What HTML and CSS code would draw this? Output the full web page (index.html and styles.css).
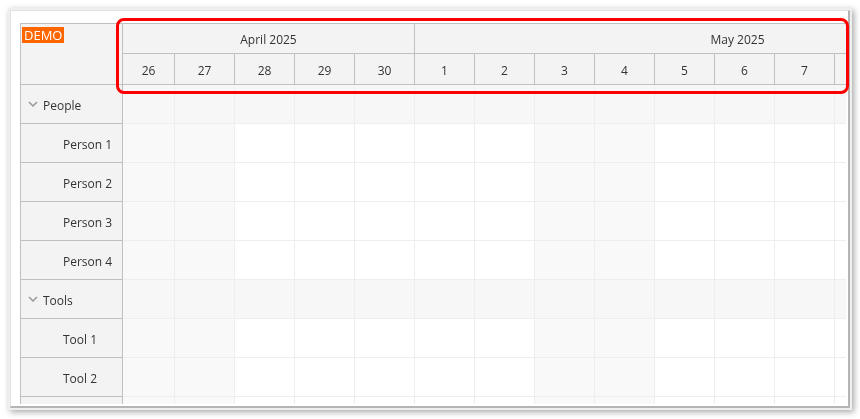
FILE: index.html
```html
<!DOCTYPE html>
<html lang="en">
<head>
    <meta charset="UTF-8">
    <meta name="viewport" content="width=device-width, initial-scale=1.0">
    <title>Scheduler</title>
    <link rel="stylesheet" href="styles.css">
</head>

<body>
    <div class="frame">
    <div class="card">
        <div class="scheduler">
            <!-- resource column -->
            <div class="rowheaders">
                <div class="corner"><span class="demo">DEMO</span></div>
                <div class="rh group"><svg class="chevron" width="10" height="6" viewBox="0 0 10 6"><polyline points="1,1 5,5 9,1"/></svg>People</div>
                <div class="rh child">Person 1</div>
                <div class="rh child">Person 2</div>
                <div class="rh child">Person 3</div>
                <div class="rh child">Person 4</div>
                <div class="rh group"><svg class="chevron" width="10" height="6" viewBox="0 0 10 6"><polyline points="1,1 5,5 9,1"/></svg>Tools</div>
                <div class="rh child">Tool 1</div>
                <div class="rh child">Tool 2</div>
                <div class="rh child"></div>
            </div>

            <!-- time header + grid -->
            <div class="timeline">
                <div class="hrow months">
                    <div class="month april">April 2025</div>
                    <div class="month may">May 2025</div>
                </div>
                <div class="hrow days">
                    <div class="day first">26</div>
                    <div class="day">27</div>
                    <div class="day">28</div>
                    <div class="day">29</div>
                    <div class="day">30</div>
                    <div class="day">1</div>
                    <div class="day">2</div>
                    <div class="day">3</div>
                    <div class="day">4</div>
                    <div class="day">5</div>
                    <div class="day">6</div>
                    <div class="day">7</div>
                    <div class="day"></div>
                </div>

                <div class="row group">
                    <div class="cell first"></div><div class="cell"></div><div class="cell"></div><div class="cell"></div><div class="cell"></div><div class="cell"></div><div class="cell"></div><div class="cell"></div><div class="cell"></div><div class="cell"></div><div class="cell"></div><div class="cell"></div><div class="cell"></div>
                </div>
                <div class="row">
                    <div class="cell first we"></div><div class="cell we"></div><div class="cell"></div><div class="cell"></div><div class="cell"></div><div class="cell"></div><div class="cell"></div><div class="cell we"></div><div class="cell we"></div><div class="cell"></div><div class="cell"></div><div class="cell"></div><div class="cell"></div>
                </div>
                <div class="row">
                    <div class="cell first we"></div><div class="cell we"></div><div class="cell"></div><div class="cell"></div><div class="cell"></div><div class="cell"></div><div class="cell"></div><div class="cell we"></div><div class="cell we"></div><div class="cell"></div><div class="cell"></div><div class="cell"></div><div class="cell"></div>
                </div>
                <div class="row">
                    <div class="cell first we"></div><div class="cell we"></div><div class="cell"></div><div class="cell"></div><div class="cell"></div><div class="cell"></div><div class="cell"></div><div class="cell we"></div><div class="cell we"></div><div class="cell"></div><div class="cell"></div><div class="cell"></div><div class="cell"></div>
                </div>
                <div class="row">
                    <div class="cell first we"></div><div class="cell we"></div><div class="cell"></div><div class="cell"></div><div class="cell"></div><div class="cell"></div><div class="cell"></div><div class="cell we"></div><div class="cell we"></div><div class="cell"></div><div class="cell"></div><div class="cell"></div><div class="cell"></div>
                </div>
                <div class="row group">
                    <div class="cell first"></div><div class="cell"></div><div class="cell"></div><div class="cell"></div><div class="cell"></div><div class="cell"></div><div class="cell"></div><div class="cell"></div><div class="cell"></div><div class="cell"></div><div class="cell"></div><div class="cell"></div><div class="cell"></div>
                </div>
                <div class="row">
                    <div class="cell first we"></div><div class="cell we"></div><div class="cell"></div><div class="cell"></div><div class="cell"></div><div class="cell"></div><div class="cell"></div><div class="cell we"></div><div class="cell we"></div><div class="cell"></div><div class="cell"></div><div class="cell"></div><div class="cell"></div>
                </div>
                <div class="row">
                    <div class="cell first we"></div><div class="cell we"></div><div class="cell"></div><div class="cell"></div><div class="cell"></div><div class="cell"></div><div class="cell"></div><div class="cell we"></div><div class="cell we"></div><div class="cell"></div><div class="cell"></div><div class="cell"></div><div class="cell"></div>
                </div>
                <div class="row">
                    <div class="cell first we"></div><div class="cell we"></div><div class="cell"></div><div class="cell"></div><div class="cell"></div><div class="cell"></div><div class="cell"></div><div class="cell we"></div><div class="cell we"></div><div class="cell"></div><div class="cell"></div><div class="cell"></div><div class="cell"></div>
                </div>
            </div>
        </div>

        <!-- annotation around the time header -->
        <div class="highlight"></div>
    </div>
    </div>
</body>

</html>
```

FILE: styles.css
```css
body {
    margin: 0;
    font-family: "Open Sans", "Noto Sans", sans-serif;
    font-size: 12px;
    color: #333;
}

/* soft frame standing in for the screenshot drop shadow */
.frame {
    width: 860px;
    height: 419px;
    box-sizing: border-box;
    padding: 10px 0 0 10px;
    background: #fff;
}

.card {
    position: relative;
    width: 840px;
    height: 398px;
    box-sizing: border-box;
    padding: 13px 0 0 10px;
    background: #fff;
    border: 1px solid #e2e2e2;
    border-right: 2px solid #b5b5b5;
    border-bottom: 2px solid #b5b5b5;
    outline: 2px solid #efefef;
    filter: drop-shadow(2px 2px 3px rgba(0, 0, 0, 0.35));
}

.scheduler {
    display: flex;
    width: 826px;
    height: 381px;
    margin: -1px 0 0 -1px;
    overflow: hidden;
    border-top: 1px solid #c0c0c0;
    box-sizing: border-box;
}

.rowheaders {
    width: 103px;
    flex-shrink: 0;
    border-left: 1px solid #c0c0c0;
    box-sizing: border-box;
    background: #f3f3f3;
}

.corner {
    height: 61px;
    box-sizing: border-box;
    border-right: 1px solid #c0c0c0;
    border-bottom: 1px solid #c0c0c0;
}

.demo {
    display: inline-block;
    margin: 3px 0 0 1px;
    padding: 0 2px;
    font-size: 13px;
    line-height: 16px;
    background: #ff6600;
    color: #fff;
}

.rh {
    height: 39px;
    box-sizing: border-box;
    padding-top: 2px;
    border-right: 1px solid #c0c0c0;
    border-bottom: 1px solid #c0c0c0;
    display: flex;
    align-items: center;
    white-space: nowrap;
}

.rh.group {
    padding-left: 7px;
}

.rh.child {
    padding-left: 42px;
}

.chevron {
    margin: -2px 5px 0 0;
    fill: none;
    stroke: #999;
    stroke-width: 1.5;
}

.timeline {
    flex: 1;
    min-width: 0;
    overflow: hidden;
}

.hrow {
    display: flex;
    background: #f3f3f3;
    box-sizing: border-box;
    border-bottom: 1px solid #c0c0c0;
}

.months {
    height: 30px;
}

.days {
    height: 31px;
}

.month,
.day {
    flex-shrink: 0;
    display: flex;
    align-items: center;
    justify-content: center;
    box-sizing: border-box;
    padding-top: 2px;
    border-right: 1px solid #c0c0c0;
}

.april {
    width: 292px;
}

.may {
    width: 646px;
}

.day {
    width: 60px;
}

.day.first {
    width: 52px;
}

.row {
    display: flex;
    height: 39px;
}

.cell {
    flex-shrink: 0;
    width: 60px;
    box-sizing: border-box;
    border-right: 1px solid #eeeeee;
    border-bottom: 1px solid #eeeeee;
    background: #fff;
}

.cell.first {
    width: 52px;
}

.cell.we {
    background: #f9f9f9;
}

.row.group .cell {
    background: #f7f7f7;
}

.highlight {
    position: absolute;
    left: 105px;
    top: 7px;
    width: 733px;
    height: 76px;
    box-sizing: border-box;
    border: 3px solid #ff0000;
    border-radius: 8px;
}
```
